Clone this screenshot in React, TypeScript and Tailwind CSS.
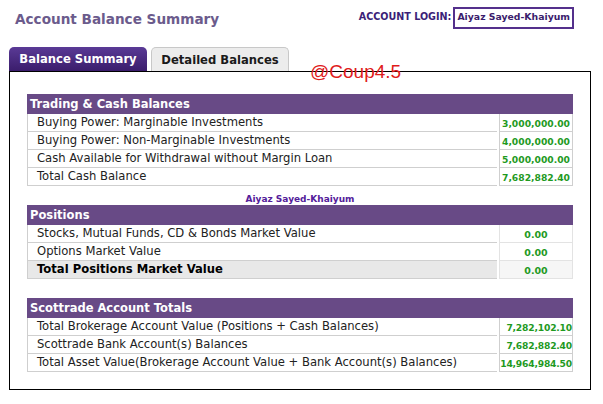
export default function App() {
  const trading = [
    { label: "Buying Power: Marginable Investments", value: "3,000,000.00" },
    { label: "Buying Power: Non-Marginable Investments", value: "4,000,000.00" },
    { label: "Cash Available for Withdrawal without Margin Loan", value: "5,000,000.00" },
    { label: "Total Cash Balance", value: "7,682,882.40" },
  ];
  const positions = [
    { label: "Stocks, Mutual Funds, CD & Bonds Market Value", value: "0.00", total: false },
    { label: "Options Market Value", value: "0.00", total: false },
    { label: "Total Positions Market Value", value: "0.00", total: true },
  ];
  const totals = [
    { label: "Total Brokerage Account Value (Positions + Cash Balances)", value: "7,282,102.10" },
    { label: "Scottrade Bank Account(s) Balances", value: "7,682,882.40" },
    { label: "Total Asset Value(Brokerage Account Value + Bank Account(s) Balances)", value: "14,964,984.50" },
  ];

  const header = (title: string) => (
    <div className="h-[20px] bg-[#684a86] pl-[3px] text-[11.5px] font-bold leading-[20px] text-white">{title}</div>
  );

  return (
    <div className="relative h-[404px] w-[603px] bg-white font-['DejaVu_Sans',Verdana,sans-serif]">
      {/* top bar */}
      <div className="flex items-start justify-between pt-[7px]">
        <h1 className="ml-[15px] mt-[2px] text-[13.6px] font-bold leading-[20px] text-[#6b5b8c]">Account Balance Summary</h1>
        <div className="mr-[29px] flex items-start">
          <span className="mt-[3px] mr-[2px] text-[9.6px] font-bold text-[#3b1f78]">ACCOUNT LOGIN:</span>
          <span className="h-[22px] border-2 border-[#54308c] px-[2px] pt-[1px] text-[9.3px] font-bold text-[#3a1c6c]">Aiyaz Sayed-Khaiyum</span>
        </div>
      </div>

      {/* tabs */}
      <div className="ml-[9px] mt-[18px] flex gap-[4px]">
        <div className="flex h-[24px] w-[138px] items-center justify-center rounded-t-[5px] bg-gradient-to-b from-[#5a3a96] to-[#3b1d6c] pt-[2px] text-[11.6px] font-bold text-white">
          Balance Summary
        </div>
        <div className="flex h-[24px] w-[138px] items-center justify-center rounded-t-[5px] border border-b-0 border-[#c8c8c8] bg-[#ececec] pt-[2px] text-[11.6px] font-bold text-[#1a1a1a]">
          Detailed Balances
        </div>
      </div>

      {/* panel */}
      <div className="ml-[9px] h-[319px] w-[582px] border border-black px-[17px] pt-[22px]">
        {header("Trading & Cash Balances")}
        {trading.map((r) => (
          <div key={r.label} className="flex h-[18px] text-[11.6px] leading-[17px]">
            <div className="flex-1 border-b border-l border-[#cfcfcf] pl-[9px] text-[#222]">{r.label}</div>
            <div className="ml-[2px] w-[74px] border-x border-b border-[#cfcfcf] pr-[2px] pt-[1px] text-right text-[9.2px] font-bold text-[#1f9a1f]">{r.value}</div>
          </div>
        ))}

        <div className="mt-[7px] h-[12px] text-center text-[9px] font-bold leading-[12px] text-[#54209a]">Aiyaz Sayed-Khaiyum</div>
        {header("Positions")}
        {positions.map((r) => (
          <div key={r.label} className="flex h-[18px] text-[11.6px] leading-[17px]">
            <div className={`flex-1 border-b border-l border-[#cfcfcf] pl-[9px] ${r.total ? "bg-[#e8e8e8] font-bold text-black" : "text-[#222]"}`}>{r.label}</div>
            <div className={`ml-[2px] w-[74px] border-x border-b border-[#e3e3e3] pt-[1px] text-center text-[9.5px] font-bold text-[#1f9a1f] ${r.total ? "bg-[#f6f6f6]" : ""}`}>{r.value}</div>
          </div>
        ))}

        <div className="h-[19px]" />
        {header("Scottrade Account Totals")}
        {totals.map((r) => (
          <div key={r.label} className="flex h-[18px] text-[11.6px] leading-[17px]">
            <div className="flex-1 border-b border-l border-[#cfcfcf] pl-[9px] text-[#222]">{r.label}</div>
            <div className="ml-[2px] w-[74px] border-x border-b border-[#cfcfcf] pt-[1px] text-right text-[9.2px] font-bold tracking-[-0.2px] text-[#1f9a1f]">{r.value}</div>
          </div>
        ))}
      </div>

      {/* watermark */}
      <div className="absolute left-[310px] top-[61px] font-['Liberation_Sans',Arial,sans-serif] text-[19px] leading-[22px] text-[#e01b1b]">@Coup4.5</div>
    </div>
  );
}
